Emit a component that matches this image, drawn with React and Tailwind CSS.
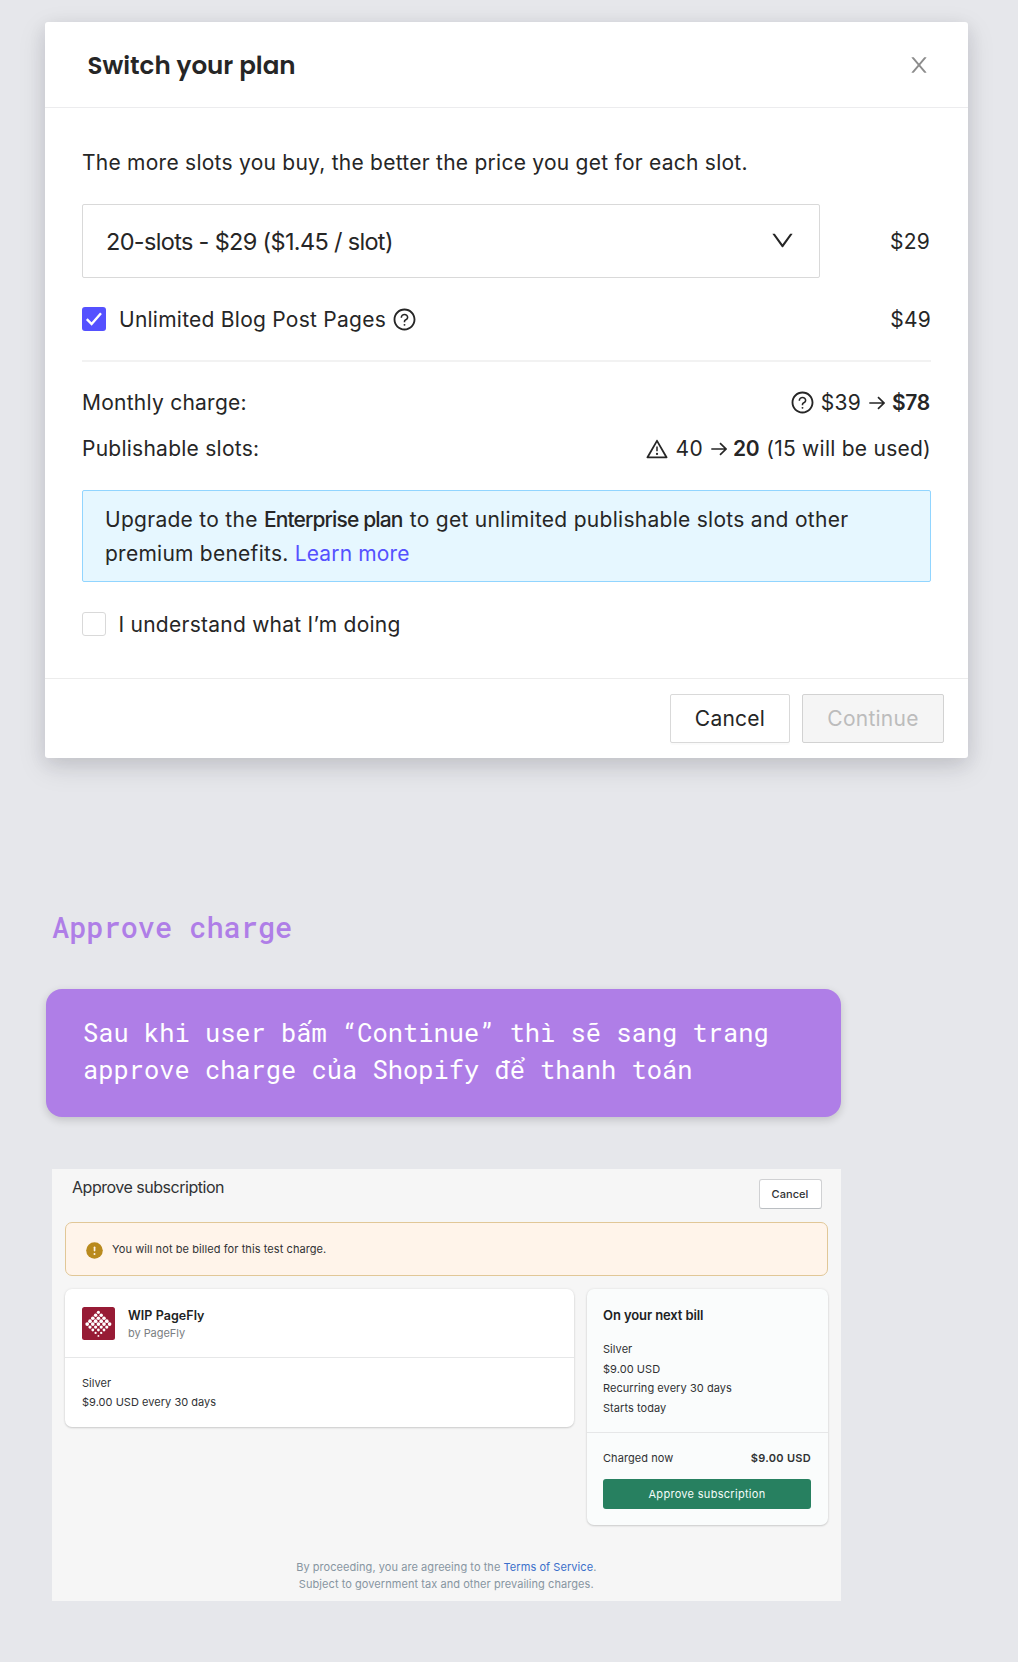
import React from "react";
import { AiOutlineQuestionCircle, AiOutlineWarning } from "react-icons/ai";

function CloseIcon() {
  return (
    <svg viewBox="0 0 1024 1024" className="size-6 fill-[#8c8c8c]">
      <path d="M563.8 512l262.5-312.9c4.4-5.2.7-13.1-6.1-13.1h-79.8c-4.7 0-9.2 2.1-12.3 5.7L511.6 449.8 295.1 191.7c-3-3.6-7.5-5.7-12.3-5.7H203c-6.8 0-10.5 7.9-6.1 13.1L459.4 512 196.9 824.9A7.95 7.95 0 0 0 203 838h79.8c4.7 0 9.2-2.1 12.3-5.7l216.5-258.1 216.5 258.1c3 3.6 7.5 5.7 12.3 5.7h79.8c6.8 0 10.5-7.9 6.1-13.1L563.8 512z" />
    </svg>
  );
}

function DownIcon() {
  return (
    <svg viewBox="0 0 1024 1024" className="mb-[2px] size-[27px] fill-[#262626]">
      <path d="M884 256h-75c-5.1 0-9.9 2.5-12.9 6.6L512 654.2 227.9 262.6c-3-4.1-7.8-6.6-12.9-6.6h-75c-6.5 0-10.3 7.4-6.5 12.7l352.6 486.1c12.8 17.6 39 17.6 51.7 0l352.6-486.1c3.9-5.3.1-12.7-6.4-12.7z" />
    </svg>
  );
}

function ArrowIcon() {
  return (
    <svg viewBox="0 0 16 14" className="h-[14px] w-4 fill-none stroke-[#262626] stroke-[1.7]">
      <path d="M0.3 7H15M9 1.2L15 7L9 12.8" />
    </svg>
  );
}

const DOT_ROWS = [1, 2, 3, 4, 5, 4, 3, 2, 1];
const DOT_RADII = [1.6, 1.75, 1.8, 1.85, 1.85, 1.6, 1.4, 1.15, 0.95];

function PageFlyLogo() {
  return (
    <svg viewBox="0 0 33 33" className="size-[33px]">
      <rect width="33" height="33" rx="2.5" fill="#971b35" />
      {DOT_ROWS.map((count, row) =>
        Array.from({ length: count }, (_, i) => (
          <circle
            key={`${row}-${i}`}
            cx={16.4 + (i - (count - 1) / 2) * 5.6}
            cy={5.3 + row * 2.95}
            r={DOT_RADII[row]}
            fill="#fff"
          />
        ))
      )}
    </svg>
  );
}

function SwitchPlanModal() {
  return (
    <section className="ml-[45px] flex h-[736px] w-[923px] flex-col rounded-[3px] bg-white text-[21px] tracking-[0.25px] shadow-[0_9px_28px_rgba(20,22,40,0.13),0_5px_18px_rgba(20,22,40,0.08)]">
      <header className="flex h-[86px] items-center justify-between border-b border-[#ececee] pr-[37px] pl-[42.5px]">
        <h1 className="pt-[4px] font-['Poppins','Inter',sans-serif] text-[24.6px] font-semibold tracking-normal">
          Switch your plan
        </h1>
        <CloseIcon />
      </header>

      <div className="flex flex-col px-[37px]">
        <p className="mt-[39px] h-8 leading-8">The more slots you buy, the better the price you get for each slot.</p>

        <div className="mt-[25px] flex items-center justify-between">
          <div className="flex h-[74px] w-[738px] items-center justify-between rounded-[2px] border border-[#d9d9d9] pr-[23px] pl-[23px]">
            <span className="pt-[2px] text-[23.5px] tracking-[-0.67px]">20-slots - $29 ($1.45 / slot)</span>
            <DownIcon />
          </div>
          <span className="mr-px pt-px">$29</span>
        </div>

        <div className="mt-[26px] flex h-8 items-center">
          <span className="mb-[2px] flex size-[24px] items-center justify-center rounded-[3px] bg-[#5551ff]">
            <svg viewBox="0 0 18 14" className="h-[14px] w-[18px] fill-none stroke-white stroke-[2.4]">
              <path d="M1.8 7.2L6.6 12L16 1.2" />
            </svg>
          </span>
          <span className="ml-[13px]">Unlimited Blog Post Pages</span>
          <AiOutlineQuestionCircle className="mb-[2px] ml-[6px] size-[25px]" />
          <span className="ml-auto">$49</span>
        </div>

        <hr className="mt-[24px] h-[2px] border-0 bg-[#f2f2f2]" />

        <div className="mt-[25px] flex h-8 items-center pr-px">
          <span>Monthly charge:</span>
          <AiOutlineQuestionCircle className="mb-px ml-auto size-[25px]" />
          <span className="mr-[8px] ml-[6px]">$39</span>
          <ArrowIcon />
          <span className="ml-[7px] font-semibold tracking-[-0.3px]">$78</span>
        </div>
        <div className="mt-[14px] flex h-8 items-center">
          <span>Publishable slots:</span>
          <AiOutlineWarning className="mb-px ml-auto size-[24px]" />
          <span className="mr-[8px] ml-[7px]">40</span>
          <ArrowIcon />
          <span className="mr-[7px] ml-[6px] font-semibold tracking-[-0.3px]">20</span>
          <span>(15 will be used)</span>
        </div>

        <div className="mt-[25px] h-[92px] rounded-[2px] border border-[#91d5ff] bg-[#e6f7ff] pt-[12px] pl-[22px]">
          <div className="flex h-[34px] items-center whitespace-pre tracking-[0.28px]">
            <span>Upgrade to the </span>
            <span className="mr-px font-medium tracking-[-0.87px]">Enterprise plan</span>
            <span> to get unlimited publishable slots and other</span>
          </div>
          <div className="flex h-[34px] items-center whitespace-pre">
            <span>premium benefits. </span>
            <a className="tracking-[0.15px] text-[#5551ff]">Learn more</a>
          </div>
        </div>

        <div className="mt-[26px] flex h-8 items-center">
          <span className="mb-px size-[24px] rounded-[3px] border border-[#d9d9d9] bg-white" />
          <span className="ml-[12.5px] pt-px">I understand what I’m doing</span>
        </div>
      </div>

      <footer className="mt-auto flex h-[80px] items-start justify-end gap-3 border-t border-[#ececec] pt-[15px] pr-6">
        <button className="h-[49px] w-[120px] rounded-[2px] border border-[#d9d9d9] bg-white tracking-[0.25px] shadow-[0_2px_1px_rgba(0,0,0,0.02)]">
          Cancel
        </button>
        <button className="h-[49px] w-[142px] rounded-[2px] border border-[#d2d2d2] bg-[#f5f5f5] tracking-[0.25px] text-[#bcbcbc]">
          Continue
        </button>
      </footer>
    </section>
  );
}

function SubscriptionPage() {
  return (
    <section className="mt-[52px] ml-[52px] flex h-[432px] w-[788.5px] flex-col bg-[#f6f6f6] px-[13px] text-[11px] tracking-[0.06px] text-[#303234]">
      <div className="flex items-start justify-between pt-[10px] pr-[6px] pl-[7px]">
        <h2 className="-mt-px text-base leading-[18px] tracking-[-0.48px]">Approve subscription</h2>
        <button className="h-[30px] w-[63px] rounded-[3px] border border-[#d0d1d3] border-b-[#babec2] bg-white pt-px font-medium">
          Cancel
        </button>
      </div>

      <div className="mt-[13px] flex h-[54px] shrink-0 items-center rounded-[7px] border border-[#e1c797] bg-[#fff4ea] pl-5">
        <svg viewBox="0 0 17 17" className="mt-[2px] size-[17px]">
          <circle cx="8.5" cy="8.5" r="8.3" fill="#b98a1e" />
          <rect x="7.7" y="4.4" width="1.7" height="5" rx="0.8" fill="#fff4ea" />
          <circle cx="8.5" cy="11.9" r="1" fill="#fff4ea" />
        </svg>
        <span className="ml-[9px] pt-px tracking-[0.08px]">You will not be billed for this test charge.</span>
      </div>

      <div className="mt-[13px] flex items-start justify-between">
        <div className="h-[138px] w-[509px] rounded-[7px] bg-white shadow-[0_0_3px_rgba(23,24,24,0.08),0_1px_2px_rgba(0,0,0,0.15)]">
          <div className="flex h-[69px] items-center border-b border-[#e6e7e8] pl-[17px]">
            <PageFlyLogo />
            <div className="ml-[13px] pt-[3px]">
              <div className="text-[12.5px] leading-[18px] font-semibold text-[#202223]">WIP PageFly</div>
              <div className="leading-[17px] tracking-[-0.05px] text-[#7a7e82]">by PageFly</div>
            </div>
          </div>
          <div className="pt-[16px] pl-[17px] leading-[19.4px] tracking-[0.03px]">
            <div>Silver</div>
            <div>$9.00 USD every 30 days</div>
          </div>
        </div>

        <aside className="h-[236px] w-[241px] rounded-[7px] bg-[#fafcfc] shadow-[0_0_3px_rgba(23,24,24,0.08),0_1px_2px_rgba(0,0,0,0.15)]">
          <div className="h-[144px] border-b border-[#e6e7e8] px-[16.5px] pt-[17px]">
            <h3 className="text-[13px] leading-[18px] font-semibold tracking-[-0.1px] text-[#202223]">
              On your next bill
            </h3>
            <div className="mt-[16px] leading-[19.7px]">
              <div>Silver</div>
              <div>$9.00 USD</div>
              <div>Recurring every 30 days</div>
              <div>Starts today</div>
            </div>
          </div>
          <div className="px-[16.5px] pt-[16px]">
            <div className="flex h-[18px] items-center justify-between">
              <span>Charged now</span>
              <span className="font-semibold tracking-[0.3px]">$9.00 USD</span>
            </div>
            <button className="mt-[12px] h-[30px] w-full rounded-[3px] bg-[#278060] pt-px tracking-[0.3px] text-[#f4fcf9]">
              Approve subscription
            </button>
          </div>
        </aside>
      </div>

      <div className="mt-[34px] flex flex-col items-center leading-[17px] text-[#8795a1]">
        <div>
          By proceeding, you are agreeing to the <a className="text-[#3a6fca]">Terms of Service</a>.
        </div>
        <div>Subject to government tax and other prevailing charges.</div>
      </div>
    </section>
  );
}

export default function App() {
  return (
    <main className="min-h-[1662px] w-[1018px] bg-[#e6e7eb] pt-[22px] font-['Inter',sans-serif] text-[#262626]">
      <SwitchPlanModal />

      <h2 className="mt-[151px] ml-[52px] h-9 font-['Roboto_Mono','DejaVu_Sans_Mono',monospace] text-[28.6px] leading-9 font-medium text-[#af7ee7]">
        Approve charge
      </h2>

      <div className="mt-[44px] ml-[46px] h-[128px] w-[794.5px] rounded-2xl bg-[#af7ee7] pt-[25px] pl-[37px] font-['Roboto_Mono','DejaVu_Sans_Mono',monospace] text-[25.4px] leading-[37px] font-normal whitespace-nowrap text-white shadow-[0_3px_8px_rgba(0,0,0,0.16)]">
        Sau khi user bấm “Continue” thì sẽ sang trang
        <br />
        approve charge của Shopify để thanh toán
      </div>

      <SubscriptionPage />
    </main>
  );
}
